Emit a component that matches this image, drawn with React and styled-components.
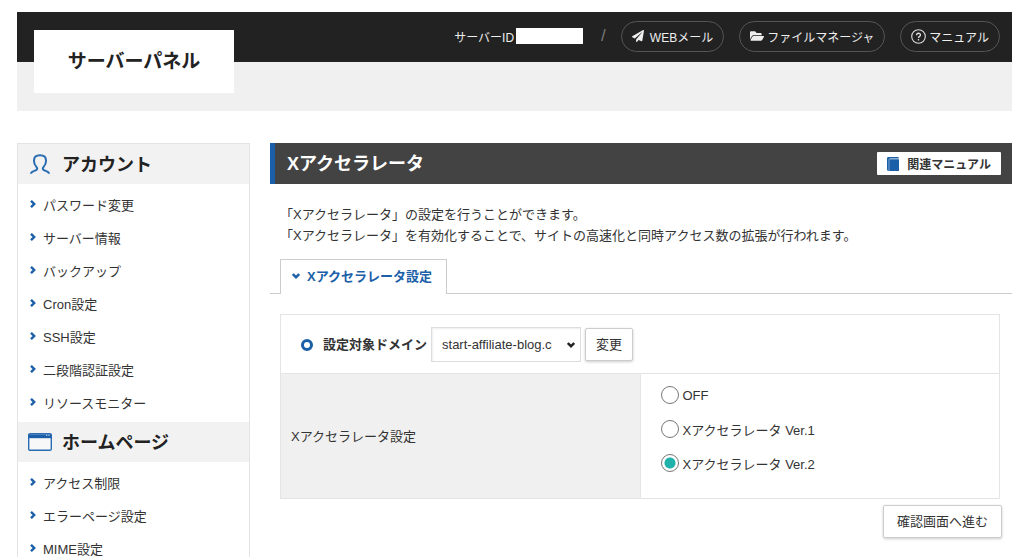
import React, { useState } from 'react';
import styled, { createGlobalStyle } from 'styled-components';
import { FaPaperPlane, FaFolderOpen } from 'react-icons/fa';

const blue = '#1b5fa8';
const text = '#333';
const line = '#e4e4e4';

const menu = [
    {
        title: 'アカウント',
        icon: 'user',
        items: ['パスワード変更', 'サーバー情報', 'バックアップ', 'Cron設定', 'SSH設定', '二段階認証設定', 'リソースモニター'],
    },
    {
        title: 'ホームページ',
        icon: 'window',
        items: ['アクセス制限', 'エラーページ設定', 'MIME設定'],
    },
]

const modes = ['OFF', 'Xアクセラレータ Ver.1', 'Xアクセラレータ Ver.2']

const UserIcon = () => (
    <svg width="20" height="20" viewBox="0 0 20 20" fill="none" stroke="#2a6db3" strokeWidth="2" aria-hidden="true">
        <path d="M1 19.8C1.2 16.2 7.2 17.6 7.2 14.4C7.2 12.6 4 12 4 7V6.4C4 3 6.4 1.2 10 1.2S16 3 16 6.4V7C16 12 12.8 12.6 12.8 14.4C12.8 17.6 18.8 16.2 19 19.8" />
    </svg>
)

const WindowIcon = () => (
    <svg width="24" height="18" viewBox="0 0 24 18" aria-hidden="true">
        <rect x="0.7" y="0.7" width="22.6" height="16.6" rx="1.4" fill="#f8f8f8" stroke="#2a6db3" strokeWidth="1.4" />
        <path d="M0.7 1.4h22.6v3.8h-22.6z" fill={blue} />
        <path d="M18 2.4h1.2M20.4 2.4h1.2" stroke="#a9c4e2" strokeWidth="1.2" />
    </svg>
)

const BookIcon = () => (
    <svg width="12" height="14" viewBox="0 0 12 14" aria-hidden="true">
        <path d="M1.4 0h10.2v1.4h-9v0.8h9.4v11.8h-10.6a1.4 1.4 0 0 1-1.4-1.4v-11.2a1.4 1.4 0 0 1 1.4-1.4z" fill={blue} />
        <path d="M2 2v12" stroke="#86aed8" strokeWidth="0.9" />
    </svg>
)

const HelpIcon = () => (
    <svg width="15" height="15" viewBox="0 0 15 15" fill="none" stroke="#ddd" strokeWidth="1.1" aria-hidden="true">
        <circle cx="7.5" cy="7.5" r="6.8" />
        <path d="M5.6 6.2C5.6 3.6 9.5 3.7 9.5 6C9.5 7.4 7.5 7.4 7.5 9M7.5 10.1v1.3" strokeWidth="1.3" />
    </svg>
)

const Chevron = ({ down, color = blue }) => (
    <svg width={down ? 8 : 6} height={down ? 6 : 8} viewBox={down ? '0 0 8 6' : '0 0 6 8'} fill="none" stroke={color} strokeWidth="2.4" aria-hidden="true">
        <path d={down ? 'M0.8 1L4 4.2L7.2 1' : 'M1 0.8L4.2 4L1 7.2'} />
    </svg>
)

const App = () => {
    const [mode, setMode] = useState(modes[2])

    return (
        <>
            <GlobalStyle />
            <Page>
                <Header>
                    <Logo>サーバーパネル</Logo>
                    <HeaderNav>
                        <ServerId>サーバーID<IdMask /></ServerId>
                        <Slash>/</Slash>
                        <PillLinks>
                            <Pill href="#webmail"><FaPaperPlane size={12} />WEBメール</Pill>
                            <Pill href="#files" tight><FaFolderOpen size={14} />ファイルマネージャ</Pill>
                            <Pill href="#manual" tight><HelpIcon />マニュアル</Pill>
                        </PillLinks>
                    </HeaderNav>
                </Header>
                <Columns>
                    <Sidebar>
                        {menu.map(group => (
                            <section key={group.title}>
                                <MenuTitle>
                                    <MenuIcon>{group.icon === 'user' ? <UserIcon /> : <WindowIcon />}</MenuIcon>
                                    <MenuName>{group.title}</MenuName>
                                </MenuTitle>
                                <MenuList>
                                    {group.items.map(item => (
                                        <li key={item}>
                                            <MenuLink href="#menu"><Chevron />{item}</MenuLink>
                                        </li>
                                    ))}
                                </MenuList>
                            </section>
                        ))}
                    </Sidebar>
                    <Main>
                        <TitleBar>
                            <Title>Xアクセラレータ</Title>
                            <ManualLink href="#related"><BookIcon />関連マニュアル</ManualLink>
                        </TitleBar>
                        <Lead>
                            「Xアクセラレータ」の設定を行うことができます。<br />
                            「Xアクセラレータ」を有効化することで、サイトの高速化と同時アクセス数の拡張が行われます。
                        </Lead>
                        <Tabs>
                            <Tab href="#setting"><Chevron down />Xアクセラレータ設定</Tab>
                        </Tabs>
                        <Form onSubmit={evt => evt.preventDefault()}>
                            <Table>
                                <tbody>
                                    <tr>
                                        <DomainCell colSpan={2}>
                                            <DomainRow>
                                                <Ring />
                                                <DomainLabel htmlFor="domain">設定対象ドメイン</DomainLabel>
                                                <SelectWrapper>
                                                    <Select id="domain">
                                                        <option>start-affiliate-blog.com</option>
                                                    </Select>
                                                    <SelectArrow><Chevron down color="#222" /></SelectArrow>
                                                </SelectWrapper>
                                                <Button type="button">変更</Button>
                                            </DomainRow>
                                        </DomainCell>
                                    </tr>
                                    <tr>
                                        <NameCell scope="row" id="mode-label">Xアクセラレータ設定</NameCell>
                                        <ModeCell>
                                            <ModeList role="radiogroup" aria-labelledby="mode-label">
                                                {modes.map(item => (
                                                    <ModeLabel key={item}>
                                                        <Radio name="mode" checked={mode === item} onChange={() => setMode(item)} />
                                                        {item}
                                                    </ModeLabel>
                                                ))}
                                            </ModeList>
                                        </ModeCell>
                                    </tr>
                                </tbody>
                            </Table>
                            <Actions>
                                <Button wide>確認画面へ進む</Button>
                            </Actions>
                        </Form>
                    </Main>
                </Columns>
            </Page>
        </>
    );
}

export default App;

// Styling
const GlobalStyle = createGlobalStyle`
    * {
        box-sizing: border-box;
    }
    body {
        margin: 0;
        background: #fff;
        color: ${text};
        font-family: "Liberation Sans", "Noto Sans CJK JP", sans-serif;
        font-size: 13px;
    }
    a {
        color: inherit;
        text-decoration: none;
    }
    svg {
        flex: none;
    }
`

const Page = styled.div`
    padding: 12px 12px 0 17px;
`

const Header = styled.header`
    display: flex;
    align-items: flex-start;
    justify-content: space-between;
    padding: 0 12px 18px 17px;
    margin-bottom: 32px;
    background: linear-gradient(#222 50px, #f0f0f0 50px);
`
const Logo = styled.div`
    width: 200px;
    margin-top: 18px;
    background: #fff;
    color: #222;
    font-size: 19px;
    font-weight: 700;
    line-height: 63px;
    text-align: center;
`
const HeaderNav = styled.nav`
    display: flex;
    align-items: center;
    height: 48px;
    color: #eee;
    font-size: 12px;
`
const ServerId = styled.span`
    display: flex;
    align-items: center;
    gap: 2px;
`
const IdMask = styled.span`
    width: 67px;
    height: 16px;
    background: #fff;
`
const Slash = styled.span`
    margin: 0 15px 0 18px;
    color: #777;
    font-size: 17px;
`
const PillLinks = styled.div`
    display: flex;
    gap: 15px;
`
const Pill = styled.a.withConfig({ shouldForwardProp: prop => prop !== 'tight' })`
    display: flex;
    align-items: center;
    gap: ${props => props.tight ? '3px' : '6px'};
    height: 31px;
    padding: 0 10px;
    border: 1px solid #555;
    border-radius: 16px;
`

const Columns = styled.div`
    display: flex;
    gap: 20px;
`
const Sidebar = styled.aside`
    flex: none;
    width: 233px;
    border: 1px solid ${line};
    border-bottom: 0;
`
const MenuTitle = styled.h2`
    display: flex;
    align-items: center;
    gap: 10px;
    height: 40px;
    margin: 0;
    padding-left: 9px;
    background: #f2f2f2;
    color: #222;
    font-size: 18px;
    font-weight: 700;
`
const MenuIcon = styled.span`
    display: flex;
    justify-content: center;
    width: 25px;
`
const MenuName = styled.span`
    padding-bottom: 3px;
`
const MenuList = styled.ul`
    margin: 0;
    padding: 4px 0 3px;
    list-style: none;
`
const MenuLink = styled.a`
    display: flex;
    align-items: center;
    gap: 7px;
    height: 33px;
    padding: 0 12px 1px;
`

const Main = styled.main`
    flex: 1;
    min-width: 0;
`
const TitleBar = styled.div`
    display: flex;
    align-items: center;
    justify-content: space-between;
    height: 41px;
    padding: 0 11px 0 12px;
    border-left: 5px solid ${blue};
    background: #434343;
`
const Title = styled.h1`
    margin: 0;
    padding-bottom: 4px;
    color: #fff;
    font-size: 18px;
    font-weight: 700;
`
const ManualLink = styled.a`
    display: flex;
    align-items: center;
    gap: 8px;
    height: 23px;
    padding: 0 10px;
    border-radius: 1px;
    background: #fff;
    font-size: 12px;
    font-weight: 700;
`
const Lead = styled.p`
    margin: 20px 0 13px;
    padding: 0 10px;
    line-height: 21px;
`
const Tabs = styled.div`
    display: flex;
    padding-left: 10px;
    border-bottom: 1px solid #ccc;
`
const Tab = styled.a`
    display: flex;
    align-items: center;
    gap: 7px;
    height: 35px;
    margin-bottom: -1px;
    padding: 0 14px 3px 11px;
    border: 1px solid #ccc;
    border-bottom: 0;
    background: #fff;
    color: ${blue};
    font-weight: 700;
`

const Form = styled.form`
    padding: 20px 12px 20px 10px;
`
const Table = styled.table`
    width: 100%;
    border-collapse: collapse;
    table-layout: fixed;
    td, th {
        border: 1px solid ${line};
    }
`
const DomainCell = styled.td`
    padding: 12px 20px 11px;
`
const DomainRow = styled.div`
    display: flex;
    align-items: center;
    gap: 4px;
`
const Ring = styled.span`
    width: 12px;
    height: 12px;
    margin-right: 6px;
    border: 3px solid ${blue};
    border-radius: 50%;
`
const DomainLabel = styled.label`
    padding-bottom: 2px;
    font-weight: 700;
`
const SelectWrapper = styled.div`
    position: relative;
    width: 150px;
`
const Select = styled.select`
    width: 100%;
    height: 35px;
    padding: 0 28px 0 10px;
    appearance: none;
    border: 1px solid #ddd;
    border-radius: 0;
    background: #fff;
    box-shadow: inset 1px 1px 2px #eee;
    color: ${text};
    font-family: inherit;
    font-size: 13px;
`
const SelectArrow = styled.span`
    position: absolute;
    top: 0;
    right: 6px;
    display: flex;
    align-items: center;
    height: 100%;
    pointer-events: none;
`
const Button = styled.button.withConfig({ shouldForwardProp: prop => prop !== 'wide' })`
    height: 33px;
    padding: 0 ${props => props.wide ? '13px' : '10px'} 3px;
    border: 1px solid #ccc;
    border-radius: 2px;
    background: #fff;
    box-shadow: 0 1px 3px rgba(0, 0, 0, 0.2);
    color: ${text};
    font-family: inherit;
    font-size: 13px;
`
const NameCell = styled.th`
    padding: 0 10px 2px;
    background: #f0f0f0;
    font-weight: 400;
    text-align: left;
`
const ModeCell = styled.td`
    padding: 4px 20px 18px;
`
const ModeList = styled.div`
    display: flex;
    flex-direction: column;
`
const ModeLabel = styled.label`
    display: flex;
    align-items: center;
    gap: 4px;
    height: 34px;
`
const Radio = styled.input.attrs({ type: 'radio' })`
    width: 18px;
    height: 18px;
    margin: 0;
    appearance: none;
    border: 1px solid #777;
    border-radius: 50%;
    background: ${props => props.checked ? 'radial-gradient(circle, #20b2aa 5px, #fff 6px)' : '#fff'};
`
const Actions = styled.div`
    display: flex;
    justify-content: flex-end;
    margin: 6px -2px 0 0;
`
